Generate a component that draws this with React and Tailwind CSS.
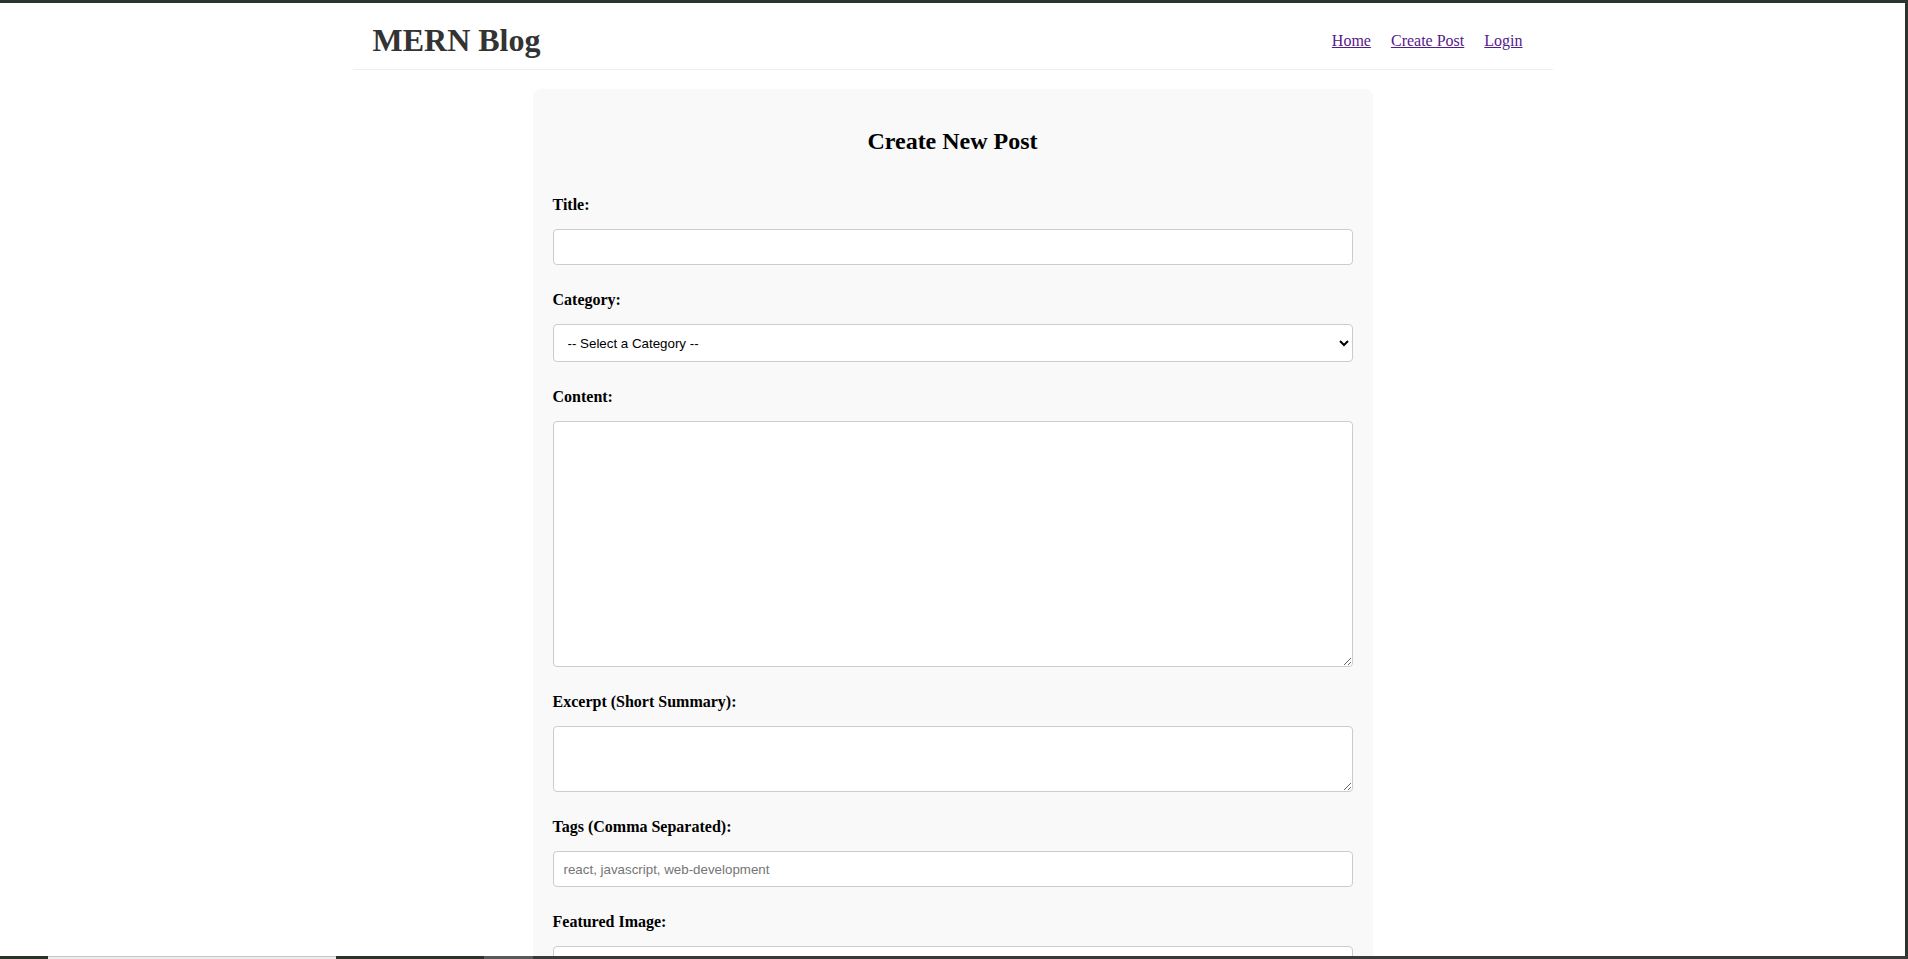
import React, { useState } from 'react';

const labelCls = "block h-[20px] leading-[20px] mb-[14px] font-bold text-[16px] text-black";
const fieldCls = "block w-full px-[10px] border border-[#cccccc] rounded-[4px] bg-white text-[13.33px] text-black font-['Liberation_Sans',Arial,sans-serif] placeholder:text-[#757575] outline-none";

const App = () => {
  const [form, setForm] = useState({
    title: '',
    category: '',
    content: '',
    excerpt: '',
    tags: '',
  });

  const set = (key) => (e) => setForm({ ...form, [key]: e.target.value });

  return (
    <div className="relative h-[959px] overflow-hidden bg-[#2c3430] pt-[3px] pr-[3px] font-['Liberation_Serif','Times_New_Roman',serif]">
      <div className="h-full bg-white">
        {/* Header */}
        <header className="mx-auto w-[1200px] h-[67px] flex items-center justify-between px-[20px] pt-[8px] border-b border-[#eeeeee]">
          <h1 className="text-[32px] font-bold text-[#333333] leading-[37px]">MERN Blog</h1>
          <nav className="flex pt-[2px]">
            <a href="#" className="mx-[10px] text-[16px] text-[#551a8b] underline">Home</a>
            <a href="#" className="mx-[10px] text-[16px] text-[#551a8b] underline">Create Post</a>
            <a href="#" className="mx-[10px] text-[16px] text-[#551a8b] underline">Login</a>
          </nav>
        </header>

        {/* Form card */}
        <div className="mx-auto mt-[19px] w-[840px] bg-[#f9f9f9] rounded-[8px] p-[20px]">
          <h2 className="mt-[18px] mb-[40px] text-center text-[24px] font-bold text-black leading-[28px]">
            Create New Post
          </h2>

          <form onSubmit={(e) => e.preventDefault()}>
            <label className={labelCls}>Title:</label>
            <input
              type="text"
              value={form.title}
              onChange={set('title')}
              className={`${fieldCls} h-[36px] mb-[25px]`}
            />

            <label className={labelCls}>Category:</label>
            <select
              value={form.category}
              onChange={set('category')}
              className={`${fieldCls} h-[38px] mb-[25px] pl-[10px]`}
            >
              <option value="">-- Select a Category --</option>
              <option value="tech">Technology</option>
              <option value="life">Lifestyle</option>
            </select>

            <label className={labelCls}>Content:</label>
            <textarea
              value={form.content}
              onChange={set('content')}
              className={`${fieldCls} h-[246px] py-[10px] mb-[25px]`}
            />

            <label className={labelCls}>Excerpt (Short Summary):</label>
            <textarea
              value={form.excerpt}
              onChange={set('excerpt')}
              className={`${fieldCls} h-[66px] py-[10px] mb-[25px]`}
            />

            <label className={labelCls}>Tags (Comma Separated):</label>
            <input
              type="text"
              value={form.tags}
              onChange={set('tags')}
              placeholder="react, javascript, web-development"
              className={`${fieldCls} h-[36px] mb-[25px]`}
            />

            <label className={labelCls}>Featured Image:</label>
            <div className={`${fieldCls} h-[36px]`} />
          </form>
        </div>
      </div>

      {/* bottom edge of the window frame */}
      <div className="absolute bottom-0 left-0 right-0 h-[3px] flex">
        <div className="w-[48px] bg-[#2b3328]" />
        <div className="w-[288px] bg-[#ececec] border-t border-[#c8c8c8]" />
        <div className="w-[148px] bg-[#2d3329]" />
        <div className="w-[49px] bg-[#5a5a5a]" />
        <div className="flex-1 bg-[#3a3a3a]" />
      </div>
    </div>
  );
};

export default App;
